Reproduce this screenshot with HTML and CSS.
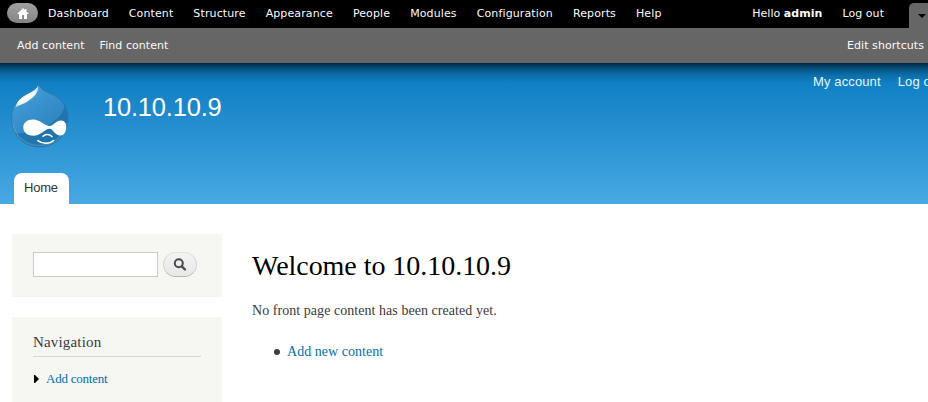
FILE: index.html
```
<!DOCTYPE html>
<html lang="en">
<head>
<meta charset="utf-8">
<title>Welcome to 10.10.10.9</title>
<link rel="stylesheet" href="styles.css">
</head>
<body>
<div class="toolbar">
  <nav class="toolbar-menu">
    <a class="home" href="#" aria-label="Home"><svg width="12" height="11" viewBox="0 0 12 11"><path d="M6 0 0 6h2v5h3V7h2v4h3V6h2L9.500 3.500V1H8v1z" fill="#fff"/></svg></a>
    <a href="#">Dashboard</a><a href="#">Content</a><a href="#">Structure</a><a href="#">Appearance</a><a href="#">People</a><a href="#">Modules</a><a href="#">Configuration</a><a href="#">Reports</a><a href="#">Help</a>
  </nav>
  <div class="toolbar-user"><a href="#">Hello <strong>admin</strong></a><a href="#">Log out</a></div>
  <a class="toggle" href="#" aria-label="Toggle shortcuts"><svg width="8" height="4" viewBox="0 0 8 4"><path d="M0 0h8L4 4z"/></svg></a>
</div>
<div class="shortcuts">
  <nav><a href="#">Add content</a><a href="#">Find content</a></nav>
  <a href="#">Edit shortcuts</a>
</div>
<header class="header">
  <div class="branding">
    <svg class="logo" width="58" height="65" viewBox="0 0 58 65">
      <defs>
        <linearGradient id="drop" x1="0" y1="0" x2=".65" y2="1"><stop offset="0" stop-color="#4aa5da"/><stop offset=".5" stop-color="#3790cc"/><stop offset="1" stop-color="#2a7fb9"/></linearGradient>
        <linearGradient id="shine" x1="1" y1="0" x2="0" y2="1"><stop offset="0" stop-color="#fff" stop-opacity=".7"/><stop offset=".4" stop-color="#fff"/><stop offset=".8" stop-color="#fff"/><stop offset="1" stop-color="#fff" stop-opacity=".6"/></linearGradient>
        <clipPath id="edge"><path d="M27.500.5C29 6 33 8 39 10.500C50 15 57 23 57 35C57 52 44 64 28.500 64S.5 52 .5 35C.5 24 6 17 14 12C21 8 26 6 27.500.5z"/></clipPath>
      </defs>
      <path d="M27.500.5C29 6 33 8 39 10.500C50 15 57 23 57 35C57 52 44 64 28.500 64S.5 52 .5 35C.5 24 6 17 14 12C21 8 26 6 27.500.5z" fill="url(#drop)" stroke="#34779f" stroke-width=".8"/>
      <g clip-path="url(#edge)">
        <path d="M54 20C53 28 49 34 42 39C32 47 16 51 3 50L18 66H60V22z" fill="#176ba5" opacity=".6"/>
        <path d="M2 41C4 53 14 62.500 28.500 62.500C43 62.500 53 53 55.500 40" fill="none" stroke="#75a8c9" stroke-width="1.500" opacity=".45"/>
      </g>
      <path d="M27 3C28 9 23 14 18.500 17C14 21 9 21 4.500 24.500C6 18.500 10 14.500 15 12C21 8.500 25 7 27 3z" fill="url(#shine)"/>
      <path d="M22 36.500C29 36.500 34 43 38.500 43C42 43 45 37.500 50 37.500C54 37.500 55.500 41 55.200 45C55 49 53 52.500 49.500 52.500C44 52.500 42 45.700 38.500 45.700C34 45.700 30 52.700 22 52.700C16 52.700 12.300 49 12.300 44.500C12.300 40 16 36.500 22 36.500z" fill="#fff"/>
      <path d="M32 53.300C34 50.700 39 50.700 41 53.700M26.800 57.700C31 61.200 38.500 61.200 42.500 57.500" fill="none" stroke="#fff" stroke-width="1.500" stroke-linecap="round"/>
    </svg>
    <a class="site-name" href="#">10.10.10.9</a>
    <nav class="account"><a href="#">My account</a><a href="#">Log out</a></nav>
  </div>
  <nav class="tabs"><a href="#">Home</a></nav>
</header>
<div class="page">
  <aside class="sidebar">
    <form class="block search">
      <input type="text" aria-label="Search">
      <button type="button" aria-label="Search"><svg width="14" height="14" viewBox="0 0 14 14"><circle cx="5.800" cy="5.300" r="4" fill="none" stroke="#4b4b4b" stroke-width="2"/><path d="M8.800 8.300 12 11.500" stroke="#4b4b4b" stroke-width="2.400" stroke-linecap="round"/></svg></button>
    </form>
    <section class="block navigation">
      <h2>Navigation</h2>
      <div class="leaf"><svg width="5" height="8" viewBox="0 0 5 8"><path d="M0 0h1l4 4-4 4H0z"/></svg><a href="#">Add content</a></div>
    </section>
  </aside>
  <main class="content">
    <h1>Welcome to 10.10.10.9</h1>
    <p>No front page content has been created yet.</p>
    <ul><li><a href="#">Add new content</a></li></ul>
  </main>
</div>
</body>
</html>
```
FILE: styles.css
```
* { box-sizing: border-box; }
body {
  margin: 0;
  height: 402px;
  overflow: hidden;
  background: #fff;
  color: #3b3b3b;
  font: 14px/21px "Liberation Serif", serif;
}
a { color: #0071b3; text-decoration: none; }
svg { display: block; flex: none; }

.toolbar, .shortcuts {
  display: flex;
  font: 11px/20px "DejaVu Sans", sans-serif;
  letter-spacing: .12px;
  white-space: nowrap;
}
.toolbar { height: 28px; background: #000; }
.toolbar a, .shortcuts a { color: #fafafa; }
.toolbar-menu, .toolbar-user { display: flex; padding-top: 4px; }
.toolbar-menu { padding-left: 7px; }
.toolbar-menu a, .toolbar-user a { padding: 0 10px; }
.toolbar-menu .home {
  display: flex;
  align-items: center;
  justify-content: center;
  width: 31px;
  height: 20px;
  margin-top: -1px;
  padding: 0;
  border-radius: 10px;
  background: linear-gradient(#a0a0a0, #858585);
}
.toolbar-user { margin-left: auto; letter-spacing: .05px; }
.toggle {
  display: flex;
  align-items: center;
  justify-content: center;
  width: 25px;
  height: 25px;
  margin: 3px -6px 0 15px;
  border-radius: 5px 5px 0 0;
  background: #666;
}
.shortcuts {
  justify-content: space-between;
  height: 35px;
  padding: 8px 4px 0 17px;
  background: #666;
}
.shortcuts nav { display: flex; gap: 15px; }
.shortcuts { letter-spacing: .06px; }

.header {
  display: flex;
  flex-direction: column;
  justify-content: space-between;
  height: 141px;
  background:
    linear-gradient(rgba(0, 0, 0, .68), rgba(0, 0, 0, .38) 5px, rgba(0, 0, 0, .12) 12px, transparent 20px),
    linear-gradient(#0779bf, #48a9e4);
  font-family: "Liberation Sans", sans-serif;
}
.branding { display: flex; align-items: flex-start; }
.logo { margin: 20px 0 0 11px; }
.site-name {
  margin: 29px 0 0 34px;
  color: #fffeff;
  font-size: 25.500px;
  letter-spacing: -.2px;
  line-height: 30px;
}
.account {
  display: flex;
  gap: 17px;
  width: 115px;
  margin: 8px 0 0 auto;
  font-size: 13px;
  letter-spacing: .12px;
  white-space: nowrap;
}
.account a { color: #e6f3fa; flex: none; }
.tabs { display: flex; padding-left: 14px; }
.tabs a {
  width: 55px;
  height: 31px;
  padding-left: 10px;
  border-radius: 8px 8px 0 0;
  background: #fff;
  color: #333;
  font-size: 13px;
  letter-spacing: -.2px;
  line-height: 29px;
}

.page { display: flex; padding: 30px 0 0 12px; }
.sidebar { width: 210px; flex: none; }
.block {
  padding: 18px 21px 0;
  background: #f6f6f2;
}
.search { display: flex; gap: 5px; height: 63px; margin-bottom: 20px; }
.search input {
  width: 125px;
  height: 25px;
  border: 1px solid #ccc;
  background: #fff;
}
.search button {
  display: flex;
  align-items: center;
  justify-content: center;
  width: 34px;
  height: 25px;
  padding: 0;
  border: 1px solid #ccc;
  border-color: #e4e4e4 #d2d2d2 #b4b4b4;
  border-radius: 13px;
  background: linear-gradient(#f3f3f3, #e8e8e8);
}
.navigation { height: 90px; padding-top: 15px; }
.navigation h2 {
  height: 25px;
  margin: 0 0 11px;
  border-bottom: 1px solid #d6d6d6;
  font-size: 15px;
  font-weight: 400;
  letter-spacing: .17px;
}
.leaf {
  display: flex;
  align-items: center;
  gap: 7px;
  padding-left: 1px;
  font-size: 13px;
  letter-spacing: -.22px;
}
.content { padding: 14px 0 0 30px; }
.content h1 {
  margin: 0 0 16px;
  color: #000;
  font-size: 28px;
  font-weight: 400;
  letter-spacing: -.04px;
  line-height: 36px;
}
.content p { margin: 0 0 20px; letter-spacing: .05px; }
.content ul { margin: 0; padding-left: 22px; list-style: none; }
.content li { display: flex; align-items: center; gap: 7px; letter-spacing: .03px; }
.content li::before {
  content: "";
  width: 6px;
  height: 6px;
  border-radius: 50%;
  background: #3b3b3b;
}
```
